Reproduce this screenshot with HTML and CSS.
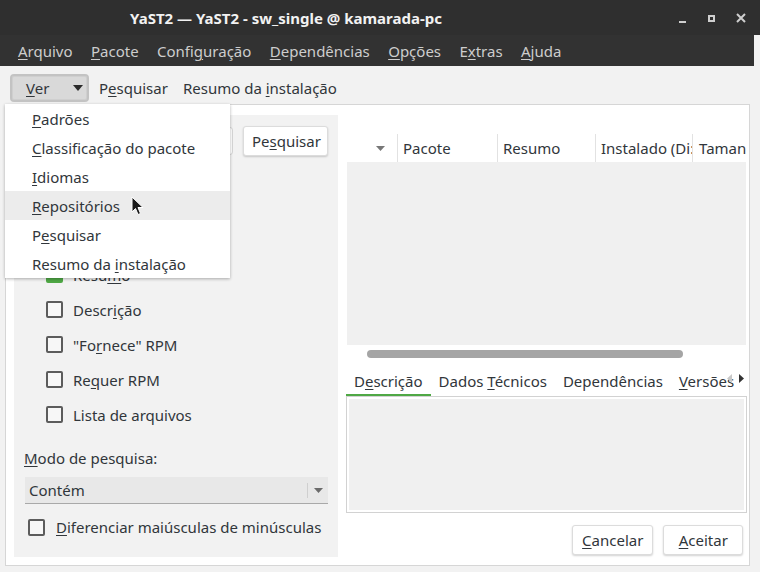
FILE: index.html
```html
<!DOCTYPE html>
<html lang="pt">
<head>
<meta charset="utf-8">
<title>YaST2</title>
<link rel="stylesheet" href="styles.css">
</head>
<body>
<div class="window">
  <header class="titlebar">
    <span class="title">YaST2 — YaST2 - sw_single @ kamarada-pc</span>
    <div class="controls">
      <svg width="12" height="12" viewBox="0 0 12 12"><rect x="2" y="9" width="7" height="2" fill="#cfcfcf"/></svg>
      <svg width="12" height="12" viewBox="0 0 12 12"><rect x="3" y="4" width="5" height="5" fill="none" stroke="#cfcfcf" stroke-width="2"/></svg>
      <svg width="12" height="12" viewBox="0 0 12 12"><path d="M2 2 L10 10 M10 2 L2 10" stroke="#cfcfcf" stroke-width="2"/></svg>
    </div>
  </header>
  <nav class="menubar">
    <span><u>A</u>rquivo</span>
    <span><u>P</u>acote</span>
    <span>Confi<u>g</u>uração</span>
    <span><u>D</u>ependências</span>
    <span><u>O</u>pções</span>
    <span>E<u>x</u>tras</span>
    <span><u>A</u>juda</span>
  </nav>
  <div class="toolbar">
    <div class="ver-btn"><span><u>V</u>er</span><svg width="10" height="6" viewBox="0 0 10 6"><path d="M0 0 H10 L5 6 Z" fill="#2b2b2b"/></svg></div>
    <span class="tool">P<u>e</u>squisar</span>
    <span class="tool">Resumo da <u>i</u>nstalação</span>
  </div>
  <main class="frame">
    <aside class="search-panel">
      <div class="search-row">
        <div class="search-input"></div>
        <button class="btn search-btn">Pe<u>s</u>quisar</button>
      </div>
      <div class="group-label">Pesquisar em</div>
      <div class="check-list">
        <label class="check-row"><span class="box checked"></span><span><u>N</u>ome</span></label>
        <label class="check-row"><span class="box checked"></span><span>Resu<u>m</u>o</span></label>
        <label class="check-row"><span class="box"></span><span>Descr<u>i</u>ção</span></label>
        <label class="check-row"><span class="box"></span><span>"Fo<u>r</u>nece" RPM</span></label>
        <label class="check-row"><span class="box"></span><span>Re<u>q</u>uer RPM</span></label>
        <label class="check-row"><span class="box"></span><span>Lista de arquivos</span></label>
      </div>
      <div class="mode-label"><u>M</u>odo de pesquisa:</div>
      <div class="combo">
        <span>Contém</span>
        <span class="combo-arrow"><svg width="9" height="5" viewBox="0 0 9 5"><path d="M0 0 H9 L4.5 5 Z" fill="#6b6b6b"/></svg></span>
      </div>
      <label class="case-row"><span class="box"></span><span><u>D</u>iferenciar maiúsculas de minúsculas</span></label>
    </aside>
    <section class="pkg-panel">
      <div class="table">
        <div class="thead">
          <div class="th th-sort"><svg width="9" height="5" viewBox="0 0 9 5"><path d="M0 0 H9 L4.5 5 Z" fill="#777"/></svg></div>
          <div class="th th-pkg">Pacote</div>
          <div class="th th-sum">Resumo</div>
          <div class="th th-inst">Instalado (Di:</div>
          <div class="th th-size">Taman</div>
        </div>
        <div class="tbody"></div>
      </div>
      <div class="hscroll"><div class="hscroll-bar"></div></div>
      <div class="tabs">
        <span class="tab active">D<u>e</u>scrição</span>
        <span class="tab">Dados <u>T</u>écnicos</span>
        <span class="tab">Dependências</span>
        <span class="tab"><u>V</u>ersões</span>
        <span class="tab-scroll">
          <svg width="5" height="9" viewBox="0 0 5 9"><path d="M5 0 V9 L0 4.5 Z" fill="#c8c8c8"/></svg>
          <svg width="5" height="9" viewBox="0 0 5 9"><path d="M0 0 V9 L5 4.5 Z" fill="#333"/></svg>
        </span>
      </div>
      <div class="tab-pane"><div class="tab-pane-inner"></div></div>
      <div class="actions">
        <button class="btn"><u>C</u>ancelar</button>
        <button class="btn"><u>A</u>ceitar</button>
      </div>
    </section>
  </main>

  <ul class="menu">
    <li><u>P</u>adrões</li>
    <li><u>C</u>lassificação do pacote</li>
    <li><u>I</u>diomas</li>
    <li class="hover"><u>R</u>epositórios</li>
    <li>P<u>e</u>squisar</li>
    <li>Resumo da <u>i</u>nstalação</li>
  </ul>
  <svg class="cursor" width="14" height="20" viewBox="0 0 14 20"><path d="M1 1 L1 16 L4.5 12.5 L7 18.5 L9.5 17.5 L7 11.5 L12 11.5 Z" fill="#1a1a1a" stroke="#fff" stroke-width="1"/></svg>
</div>
</body>
</html>
```

FILE: styles.css
```css
* { box-sizing: border-box; }
html, body { margin: 0; padding: 0; }
body {
  width: 760px;
  height: 572px;
  overflow: hidden;
  background: #f2f2f2;
  font-family: "Noto Sans", "DejaVu Sans", sans-serif;
  font-size: 15px;
  color: #31363b;
}
u { text-decoration: underline; text-underline-offset: 2px; text-decoration-thickness: 1px; }
button { font: inherit; color: inherit; }

.window { position: relative; height: 572px; }

.titlebar {
  height: 35px;
  background: #2f2f2f;
  display: flex;
  align-items: center;
  padding-left: 130px;
  padding-right: 13px;
}
.title { color: #f2f2f2; font-weight: bold; font-size: 15px; }
.controls { margin-left: auto; display: flex; gap: 17px; }

.menubar {
  height: 31px;
  margin-right: 6px;
  background: #323232;
  color: #cdcdcd;
  display: flex;
  align-items: center;
  gap: 18.4px;
  padding-left: 18px;
}

.toolbar {
  height: 38px;
  display: flex;
  align-items: flex-start;
  padding: 8px 0 0 10px;
  gap: 15px;
}
.ver-btn {
  width: 79px;
  height: 28px;
  border: 2px solid #c3c3c3;
  border-radius: 4px;
  background: #d9d9d9;
  box-shadow: inset 0 0 0 1px #cfcfcf;
  display: flex;
  align-items: center;
  justify-content: space-between;
  padding: 0 4px 0 14px;
  margin-right: -5px;
}
.tool { line-height: 28px; }

.frame {
  height: 462px;
  margin: 0 10px 0 5px;
  border: 1px solid #d6d6d6;
  background: #fff;
  display: flex;
  gap: 8px;
  padding: 10px 3px 8px 8px;
}

.search-panel {
  width: 324px;
  background: #f2f2f2;
  display: flex;
  flex-direction: column;
  padding: 11px 10px 0 10px;
}
.search-row { display: flex; gap: 10px; height: 30px; align-items: center; }
.search-input {
  width: 209px;
  height: 28px;
  background: #fff;
  border: 1px solid #d6d6d6;
  border-radius: 3px;
}
.btn {
  height: 30px;
  background: #fff;
  border: 1px solid #dcdcdc;
  border-radius: 3px;
  box-shadow: 0 1px 2px rgba(0,0,0,0.18);
  padding: 0 8px;
  cursor: default;
}
.search-btn { width: 85px; }

.group-label { height: 67px; display: flex; align-items: flex-end; padding-bottom: 10px; }
.check-list { display: flex; flex-direction: column; padding-left: 22px; margin-top: -1px; }
.check-row, .case-row { display: flex; align-items: center; gap: 10px; }
.check-row { height: 35px; }
.box {
  width: 17px;
  height: 17px;
  border: 2px solid #5c5c5c;
  border-radius: 2px;
  background: #f7f7f7;
  flex: none;
}
.box.checked { background: #4fa845; border-color: #4fa845; }

.mode-label { margin-top: 15px; height: 22px; line-height: 22px; }
.combo {
  margin-top: 8px;
  height: 27px;
  margin-left: 1px;
  background: #e8e8e8;
  border-bottom: 1px solid #a9a9a9;
  display: flex;
  align-items: center;
  padding-left: 4px;
}
.combo-arrow {
  margin-left: auto;
  height: 15px;
  width: 21px;
  border-left: 1px solid #cfcfcf;
  display: flex;
  align-items: center;
  justify-content: center;
}
.case-row { margin-top: 10px; height: 26px; padding-left: 4px; gap: 11px; }

.pkg-panel {
  flex: 1;
  display: flex;
  flex-direction: column;
  padding-top: 19px;
}
.table { margin: 0 1px; }
.thead { height: 28px; display: flex; background: #fff; }
.th {
  height: 28px;
  line-height: 28px;
  padding-left: 5px;
  border-left: 1px solid #e2e2e2;
  white-space: nowrap;
  overflow: hidden;
}
.th-sort { width: 50px; border-left: none; display: flex; align-items: center; justify-content: flex-end; padding-right: 12px; }
.th-pkg { width: 100px; }
.th-sum { width: 98px; }
.th-inst { width: 97px; }
.th-size { flex: 1; padding-left: 6px; }
.tbody { height: 183px; background: #f0f0f0; }

.hscroll { height: 20px; padding: 5px 0 0 21px; }
.hscroll-bar { width: 316px; height: 8px; border-radius: 4px; background: #a5a5a5; }

.tabs {
  height: 32px;
  display: flex;
  align-items: stretch;
  position: relative;
  overflow: hidden;
  border-bottom: 1px solid #d2d2d2;
}
.tab { display: block; padding: 0 8px; line-height: 32px; white-space: nowrap; }
.tab.active { box-shadow: inset 0 -2px 0 #4fa845; }
.tab-scroll {
  position: absolute;
  right: 3px;
  top: 0;
  height: 31px;
  display: flex;
  align-items: center;
  gap: 7px;
  padding-bottom: 4px;
}
.tab-pane {
  height: 116px;
  border: 1px solid #d2d2d2;
  border-top: none;
  padding: 2px;
  background: #fff;
}
.tab-pane-inner { height: 100%; background: #f0f0f0; }

.actions {
  margin-top: 12px;
  display: flex;
  justify-content: flex-end;
  gap: 10px;
  padding-right: 4px;
}
.actions .btn { width: 81px; }
.actions .btn + .btn { width: 80px; }

.menu {
  position: absolute;
  left: 5px;
  top: 104px;
  width: 225px;
  margin: 0;
  padding: 0;
  list-style: none;
  background: #fff;
  box-shadow: 0 1px 3px rgba(0,0,0,0.3);
}
.menu li { height: 29px; line-height: 30px; padding-left: 27px; }
.menu li.hover { background: #ececec; }

.cursor { position: absolute; left: 131px; top: 196px; }
```
